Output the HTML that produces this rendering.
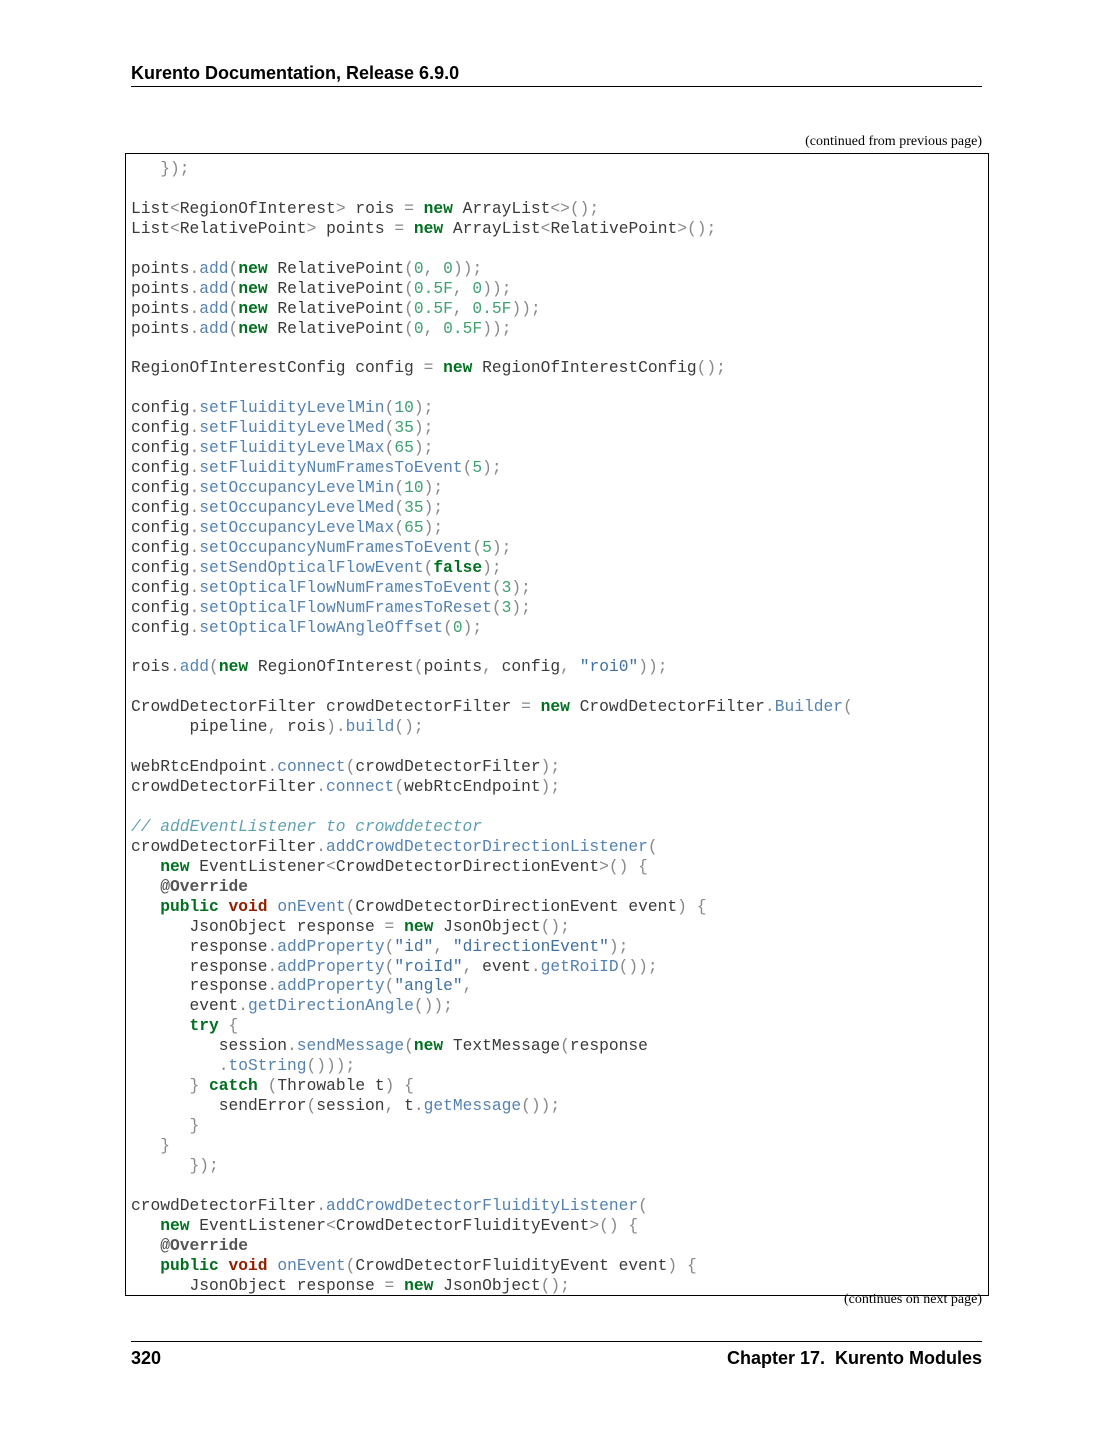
<!DOCTYPE html>
<html><head><meta charset="utf-8"><style>
html,body{margin:0;padding:0;background:#fff}
body{width:1113px;height:1440px;position:relative;overflow:hidden}
.hdr{position:absolute;left:131px;top:63px;font:bold 18px "Liberation Sans",sans-serif;color:#000}
.hl{position:absolute;left:131px;width:851px;height:1px;background:#000}
.cont{position:absolute;right:131px;font:14px "Liberation Serif",serif;color:#000}
.box{position:absolute;left:125px;top:153px;width:862px;height:1141px;border:1px solid #000}
pre{position:absolute;left:131px;top:159px;margin:0;font:16.25px/19.93px "Liberation Mono",monospace;color:#3a3a3a}
.k{color:#007020;font-weight:bold}.t{color:#902000;font-weight:bold}
.n{color:#5582b0}.m{color:#40a070}.s{color:#4070a0}.p{color:#888}
.c{color:#60a0b0;font-style:italic}.d{color:#555;font-weight:bold}
.ft{position:absolute;top:1348px;font:bold 18px "Liberation Sans",sans-serif;color:#000}
</style></head><body>
<div class="hdr">Kurento Documentation, Release 6.9.0</div>
<div class="hl" style="top:86px"></div>
<div class="cont" style="top:134px">(continued from previous page)</div>
<div class="box"></div>
<pre>   <span class="p">});</span>

List<span class="p">&lt;</span>RegionOfInterest<span class="p">&gt;</span> rois <span class="p">=</span> <span class="k">new</span> ArrayList<span class="p">&lt;&gt;();</span>
List<span class="p">&lt;</span>RelativePoint<span class="p">&gt;</span> points <span class="p">=</span> <span class="k">new</span> ArrayList<span class="p">&lt;</span>RelativePoint<span class="p">&gt;();</span>

points<span class="p">.</span><span class="n">add</span><span class="p">(</span><span class="k">new</span> RelativePoint<span class="p">(</span><span class="m">0</span><span class="p">,</span> <span class="m">0</span><span class="p">));</span>
points<span class="p">.</span><span class="n">add</span><span class="p">(</span><span class="k">new</span> RelativePoint<span class="p">(</span><span class="m">0.5F</span><span class="p">,</span> <span class="m">0</span><span class="p">));</span>
points<span class="p">.</span><span class="n">add</span><span class="p">(</span><span class="k">new</span> RelativePoint<span class="p">(</span><span class="m">0.5F</span><span class="p">,</span> <span class="m">0.5F</span><span class="p">));</span>
points<span class="p">.</span><span class="n">add</span><span class="p">(</span><span class="k">new</span> RelativePoint<span class="p">(</span><span class="m">0</span><span class="p">,</span> <span class="m">0.5F</span><span class="p">));</span>

RegionOfInterestConfig config <span class="p">=</span> <span class="k">new</span> RegionOfInterestConfig<span class="p">();</span>

config<span class="p">.</span><span class="n">setFluidityLevelMin</span><span class="p">(</span><span class="m">10</span><span class="p">);</span>
config<span class="p">.</span><span class="n">setFluidityLevelMed</span><span class="p">(</span><span class="m">35</span><span class="p">);</span>
config<span class="p">.</span><span class="n">setFluidityLevelMax</span><span class="p">(</span><span class="m">65</span><span class="p">);</span>
config<span class="p">.</span><span class="n">setFluidityNumFramesToEvent</span><span class="p">(</span><span class="m">5</span><span class="p">);</span>
config<span class="p">.</span><span class="n">setOccupancyLevelMin</span><span class="p">(</span><span class="m">10</span><span class="p">);</span>
config<span class="p">.</span><span class="n">setOccupancyLevelMed</span><span class="p">(</span><span class="m">35</span><span class="p">);</span>
config<span class="p">.</span><span class="n">setOccupancyLevelMax</span><span class="p">(</span><span class="m">65</span><span class="p">);</span>
config<span class="p">.</span><span class="n">setOccupancyNumFramesToEvent</span><span class="p">(</span><span class="m">5</span><span class="p">);</span>
config<span class="p">.</span><span class="n">setSendOpticalFlowEvent</span><span class="p">(</span><span class="k">false</span><span class="p">);</span>
config<span class="p">.</span><span class="n">setOpticalFlowNumFramesToEvent</span><span class="p">(</span><span class="m">3</span><span class="p">);</span>
config<span class="p">.</span><span class="n">setOpticalFlowNumFramesToReset</span><span class="p">(</span><span class="m">3</span><span class="p">);</span>
config<span class="p">.</span><span class="n">setOpticalFlowAngleOffset</span><span class="p">(</span><span class="m">0</span><span class="p">);</span>

rois<span class="p">.</span><span class="n">add</span><span class="p">(</span><span class="k">new</span> RegionOfInterest<span class="p">(</span>points<span class="p">,</span> config<span class="p">,</span> <span class="s">"roi0"</span><span class="p">));</span>

CrowdDetectorFilter crowdDetectorFilter <span class="p">=</span> <span class="k">new</span> CrowdDetectorFilter<span class="p">.</span><span class="n">Builder</span><span class="p">(</span>
      pipeline<span class="p">,</span> rois<span class="p">).</span><span class="n">build</span><span class="p">();</span>

webRtcEndpoint<span class="p">.</span><span class="n">connect</span><span class="p">(</span>crowdDetectorFilter<span class="p">);</span>
crowdDetectorFilter<span class="p">.</span><span class="n">connect</span><span class="p">(</span>webRtcEndpoint<span class="p">);</span>

<span class="c">// addEventListener to crowddetector</span>
crowdDetectorFilter<span class="p">.</span><span class="n">addCrowdDetectorDirectionListener</span><span class="p">(</span>
   <span class="k">new</span> EventListener<span class="p">&lt;</span>CrowdDetectorDirectionEvent<span class="p">&gt;()</span> <span class="p">{</span>
   <span class="d">@Override</span>
   <span class="k">public</span> <span class="t">void</span> <span class="n">onEvent</span><span class="p">(</span>CrowdDetectorDirectionEvent event<span class="p">)</span> <span class="p">{</span>
      JsonObject response <span class="p">=</span> <span class="k">new</span> JsonObject<span class="p">();</span>
      response<span class="p">.</span><span class="n">addProperty</span><span class="p">(</span><span class="s">"id"</span><span class="p">,</span> <span class="s">"directionEvent"</span><span class="p">);</span>
      response<span class="p">.</span><span class="n">addProperty</span><span class="p">(</span><span class="s">"roiId"</span><span class="p">,</span> event<span class="p">.</span><span class="n">getRoiID</span><span class="p">());</span>
      response<span class="p">.</span><span class="n">addProperty</span><span class="p">(</span><span class="s">"angle"</span><span class="p">,</span>
      event<span class="p">.</span><span class="n">getDirectionAngle</span><span class="p">());</span>
      <span class="k">try</span> <span class="p">{</span>
         session<span class="p">.</span><span class="n">sendMessage</span><span class="p">(</span><span class="k">new</span> TextMessage<span class="p">(</span>response
         <span class="p">.</span><span class="n">toString</span><span class="p">()));</span>
      <span class="p">}</span> <span class="k">catch</span> <span class="p">(</span>Throwable t<span class="p">)</span> <span class="p">{</span>
         sendError<span class="p">(</span>session<span class="p">,</span> t<span class="p">.</span><span class="n">getMessage</span><span class="p">());</span>
      <span class="p">}</span>
   <span class="p">}</span>
      <span class="p">});</span>

crowdDetectorFilter<span class="p">.</span><span class="n">addCrowdDetectorFluidityListener</span><span class="p">(</span>
   <span class="k">new</span> EventListener<span class="p">&lt;</span>CrowdDetectorFluidityEvent<span class="p">&gt;()</span> <span class="p">{</span>
   <span class="d">@Override</span>
   <span class="k">public</span> <span class="t">void</span> <span class="n">onEvent</span><span class="p">(</span>CrowdDetectorFluidityEvent event<span class="p">)</span> <span class="p">{</span>
      JsonObject response <span class="p">=</span> <span class="k">new</span> JsonObject<span class="p">();</span></pre>
<div class="cont" style="top:1292px">(continues on next page)</div>
<div class="hl" style="top:1341px"></div>
<div class="ft" style="left:131px">320</div>
<div class="ft" style="right:131px">Chapter 17.&nbsp; Kurento Modules</div>
</body></html>
